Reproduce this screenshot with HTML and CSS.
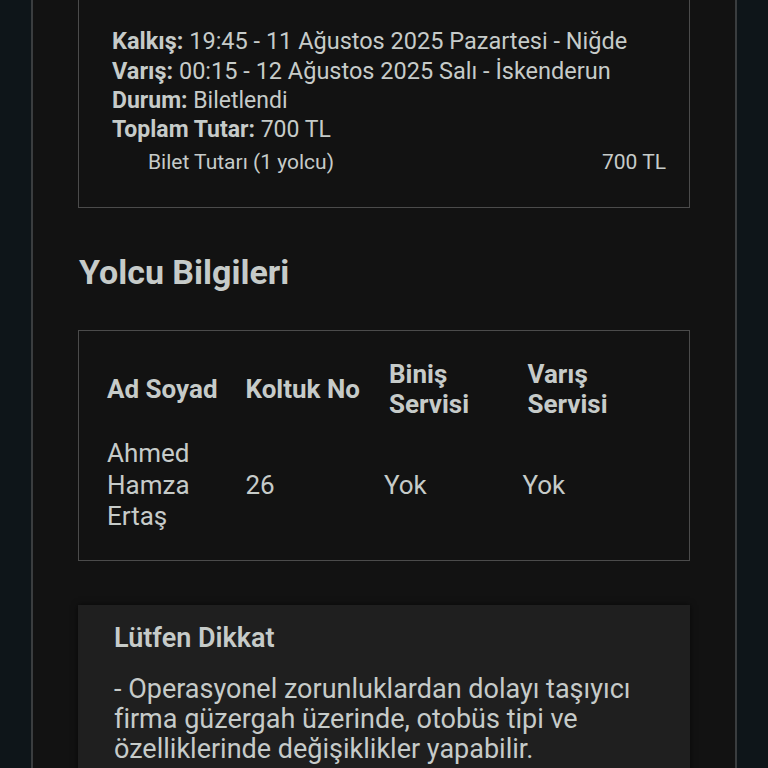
FILE: index.html
```html
<!DOCTYPE html>
<html lang="tr">
<head>
  <meta charset="UTF-8" />
  <meta name="viewport" content="width=device-width, initial-scale=1.0" />
  <title>Bilet Detayı</title>
  <link rel="stylesheet" href="styles.css">
</head>
<body>
  <div class="page">
    <section class="card ticket">
      <p class="big"><b>Kalkış:</b> 19:45 - 11 Ağustos 2025 Pazartesi - Niğde</p>
      <p class="big"><b>Varış:</b> 00:15 - 12 Ağustos 2025 Salı - İskenderun</p>
      <p><b>Durum:</b> Biletlendi</p>
      <p><b>Toplam Tutar:</b> 700 TL</p>
      <div class="price-row">
        <span>Bilet Tutarı (1 yolcu)</span>
        <span>700 TL</span>
      </div>
    </section>

    <h2>Yolcu Bilgileri</h2>

    <section class="card passengers">
      <table>
        <thead>
          <tr>
            <th>Ad Soyad</th>
            <th>Koltuk No</th>
            <th>Biniş Servisi</th>
            <th>Varış Servisi</th>
          </tr>
        </thead>
        <tbody>
          <tr>
            <td>Ahmed Hamza Ertaş</td>
            <td>26</td>
            <td>Yok</td>
            <td>Yok</td>
          </tr>
        </tbody>
      </table>
    </section>

    <section class="notice">
      <h3>Lütfen Dikkat</h3>
      <p>- Operasyonel zorunluklardan dolayı taşıyıcı firma güzergah üzerinde, otobüs tipi ve özelliklerinde değişiklikler yapabilir.</p>
    </section>
  </div>
</body>
</html>
```

FILE: styles.css
```css
:root {
  --outer: #0e1519;
  --bg: #121212;
  --text: #c6cbc9;
  --border: #4b4b4b;
  --edge: #3a3d3f;
  --notice: #1f1f1f;
}

html, body {
  margin: 0;
  height: 100%;
  overflow: hidden;
}

body {
  font-family: Roboto, 'Noto Sans', sans-serif;
  background: var(--outer);
  color: var(--text);
}

.page {
  margin-left: 31px;
  width: 612px;
  min-height: 100%;
  padding: 0 45px;
  background: var(--bg);
  border-left: 2px solid var(--edge);
  border-right: 2px solid var(--edge);
}

.card {
  border: 1px solid var(--border);
}

.ticket {
  border-top: none;
  padding: 26px 23px 30px 33px;
}

.ticket p {
  margin: 0;
  font-size: 23px;
  line-height: 29px;
}

.ticket p.big {
  font-size: 23.5px;
  line-height: 30px;
}

.price-row {
  display: flex;
  justify-content: space-between;
  margin-top: 4px;
  padding-left: 36px;
  font-size: 21px;
  line-height: 29px;
}

h2 {
  margin: 0;
  padding: 44px 0 38px 1px;
  font-size: 34px;
  line-height: 40px;
  font-weight: 700;
}

.passengers {
  padding: 19px 28px 18px;
}

table {
  width: 100%;
  border-collapse: collapse;
  table-layout: fixed;
  font-size: 26px;
  line-height: 31.5px;
}

th, td {
  text-align: left;
  vertical-align: middle;
  padding: 9px 0;
}

td {
  padding-top: 10px;
}

th {
  font-weight: 700;
  line-height: 30px;
}

th:nth-child(n+3) {
  padding-left: 5px;
}

.notice {
  margin-top: 44px;
  background: var(--notice);
  padding: 17px 36px 20px;
  box-shadow: 0 0 6px rgba(0, 0, 0, 0.6);
}

.notice h3 {
  margin: 0 0 20px;
  font-size: 27px;
  line-height: 32px;
  font-weight: 600;
}

.notice p {
  margin: 0;
  font-size: 27px;
  line-height: 30px;
}
```
